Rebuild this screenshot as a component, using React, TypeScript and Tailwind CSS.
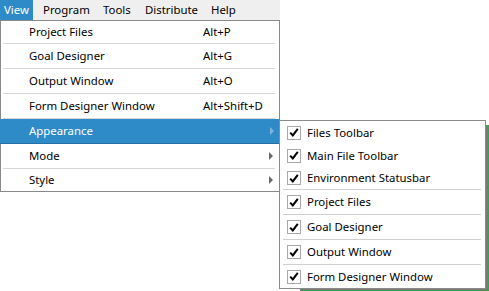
import React from "react";

const font = { fontFamily: '"Noto Sans", "Open Sans", sans-serif' };

function Sep() {
  return <div className="h-px bg-[#d7d7d7] ml-[2px] mr-[4px]" />;
}

function Item({ label, shortcut, arrow, active, h }: { label: string; shortcut?: string; arrow?: boolean; active?: boolean; h: string }) {
  return (
    <div className={`${h} flex items-center relative ${active ? "bg-[#2f8ac8] text-white -mx-px border-b border-[#256fa3]" : "text-black"}`}>
      <span className={`${active ? "pl-[29px]" : "pl-[28px]"} w-[202px]`}>{label}</span>
      {shortcut && <span>{shortcut}</span>}
      {arrow && (
        <svg className="absolute right-[5px] top-1/2 -translate-y-1/2" width="5" height="8" viewBox="0 0 5 8">
          <path d="M0 0 L4 4 L0 8 Z" fill={active ? "#7fb4dc" : "#6a6a6a"} />
        </svg>
      )}
    </div>
  );
}

function Check({ label }: { label: string }) {
  return (
    <div className="flex items-center h-full">
      <div className="ml-[7px] w-[14px] h-[14px] border border-[#a8a8a8] bg-white flex items-center justify-center">
        <svg width="10" height="9" viewBox="0 0 10 9">
          <path d="M1.2 4.6 L3.8 7.4 L8.8 0.8" stroke="#000" strokeWidth="2" fill="none" />
        </svg>
      </div>
      <span className="ml-[6px] text-black">{label}</span>
    </div>
  );
}

function SubSep() {
  return <div className="h-px bg-[#cfcfcf] ml-[3px] mr-[4px]" />;
}

export default function App() {
  return (
    <div className="relative w-[489px] h-[291px] bg-white overflow-hidden text-[11.4px] leading-none" style={font}>
      {/* background window peeking */}
      <div className="absolute left-[300px] top-[125px] w-[189px] h-[166px] bg-[#3ca046]" />
      <div className="absolute left-[300px] top-[126px] w-[187px] h-[164px] bg-[#7a7a7a]" />

      {/* menubar */}
      <div className="relative flex h-[20px] w-[280px] bg-[#efefef] text-black">
        <div className="bg-[#2f8ac8] text-white w-[33px] flex items-center pl-[4px]">View</div>
        <div className="flex items-center w-[64px] pl-[10px]">Program</div>
        <div className="flex items-center w-[41px] pl-[6px]">Tools</div>
        <div className="flex items-center w-[66px] pl-[7px]">Distribute</div>
        <div className="flex items-center pl-[7px]">Help</div>
      </div>

      {/* main menu */}
      <div className="relative w-[280px] border border-[#8a8a8a] bg-white">
        <Item h="h-[22px]" label="Project Files" shortcut="Alt+P" />
        <Sep />
        <Item h="h-[24px]" label="Goal Designer" shortcut="Alt+G" />
        <Sep />
        <Item h="h-[24px]" label="Output Window" shortcut="Alt+O" />
        <Sep />
        <Item h="h-[24px]" label="Form Designer Window" shortcut="Alt+Shift+D" />
        <Sep />
        <Item h="h-[25px]" label="Appearance" arrow active />
        <Item h="h-[24px]" label="Mode" arrow />
        <Sep />
        <Item h="h-[22px]" label="Style" arrow />
      </div>

      {/* submenu */}
      <div className="absolute left-[279px] top-[120px] w-[207px] h-[169px] border border-[#8a8a8a] bg-white flex flex-col">
        <div className="h-[23px]"><Check label="Files Toolbar" /></div>
        <div className="h-[23px]"><Check label="Main File Toolbar" /></div>
        <div className="h-[22px]"><Check label="Environment Statusbar" /></div>
        <SubSep />
        <div className="h-[24px]"><Check label="Project Files" /></div>
        <SubSep />
        <div className="h-[24px]"><Check label="Goal Designer" /></div>
        <SubSep />
        <div className="h-[24px]"><Check label="Output Window" /></div>
        <SubSep />
        <div className="h-[23px]"><Check label="Form Designer Window" /></div>
      </div>
    </div>
  );
}
